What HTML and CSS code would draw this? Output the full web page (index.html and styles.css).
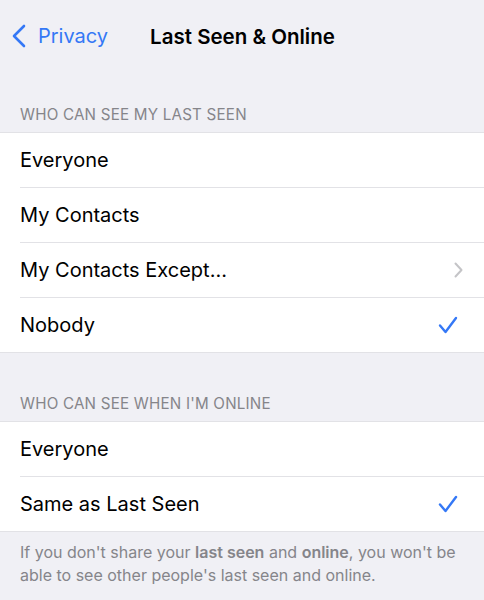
FILE: index.html
```html
<!DOCTYPE html>
<html lang="en">
<head>
    <meta charset="UTF-8">
    <meta name="viewport" content="width=device-width, initial-scale=1.0">
    <title>Last Seen &amp; Online</title>
    <link rel="stylesheet" href="styles.css">
</head>
<body>
    <div class="nav-bar">
        <div class="back">
            <svg width="14" height="24" viewBox="0 0 14 24"><path d="M12 2 L2 12 L12 22" fill="none" stroke="#3478f6" stroke-width="2.6" stroke-linecap="round" stroke-linejoin="round"/></svg>
            <span>Privacy</span>
        </div>
        <div class="title">Last Seen &amp; Online</div>
    </div>

    <div class="section-header">WHO CAN SEE MY LAST SEEN</div>
    <div class="group">
        <div class="row"><span>Everyone</span></div>
        <div class="row"><span>My Contacts</span></div>
        <div class="row"><span>My Contacts Except...</span>
            <svg class="chevron" width="9" height="16" viewBox="0 0 9 16"><path d="M1.5 1.5 L7.5 8 L1.5 14.5" fill="none" stroke="#c4c4c7" stroke-width="2" stroke-linecap="round" stroke-linejoin="round"/></svg>
        </div>
        <div class="row"><span>Nobody</span>
            <svg class="check" width="20" height="18" viewBox="0 0 20 18"><path d="M2 9.5 L7.5 16 L18 2" fill="none" stroke="#3478f6" stroke-width="2.4" stroke-linecap="round" stroke-linejoin="round"/></svg>
        </div>
    </div>

    <div class="section-header second">WHO CAN SEE WHEN I'M ONLINE</div>
    <div class="group">
        <div class="row"><span>Everyone</span></div>
        <div class="row"><span>Same as Last Seen</span>
            <svg class="check" width="20" height="18" viewBox="0 0 20 18"><path d="M2 9.5 L7.5 16 L18 2" fill="none" stroke="#3478f6" stroke-width="2.4" stroke-linecap="round" stroke-linejoin="round"/></svg>
        </div>
    </div>
    <div class="footer">If you don't share your <b>last seen</b> and <b>online</b>, you won't be able to see other people's last seen and online.</div>
</body>
</html>
```

FILE: styles.css
```css
body {
    margin: 0;
    background-color: #f0f0f5;
    font-family: Inter, "Liberation Sans", sans-serif;
    color: #000;
}
.nav-bar {
    height: 72px;
    display: flex;
    align-items: center;
    padding: 0 12px;
    box-sizing: border-box;
}
.back { display: flex; align-items: center; gap: 12px; color: #3478f6; font-size: 20px; }
.title { margin-left: 42px; font-size: 20.5px; font-weight: 600; }
.section-header {
    font-size: 15.2px;
    color: #85858a;
    padding: 33px 20px 8px;
    letter-spacing: 0.2px;
}
.section-header.second { padding-top: 41px; }
.group {
    background: #fff;
    border-top: 1px solid #e2e2e6;
    border-bottom: 1px solid #e2e2e6;
}
.row {
    height: 55px;
    margin-left: 20px;
    padding-right: 26px;
    display: flex;
    align-items: center;
    justify-content: space-between;
    font-size: 20px;
    border-bottom: 1px solid #e2e2e6;
    box-sizing: border-box;
}
.row:last-child { border-bottom: none; height: 54px; }
.chevron { margin-right: -5px; }
.footer {
    padding: 9px 14px 9px 20px;
    font-size: 16px;
    line-height: 23px;
    color: #85858a;
}
.footer b { font-weight: 600; }
```
